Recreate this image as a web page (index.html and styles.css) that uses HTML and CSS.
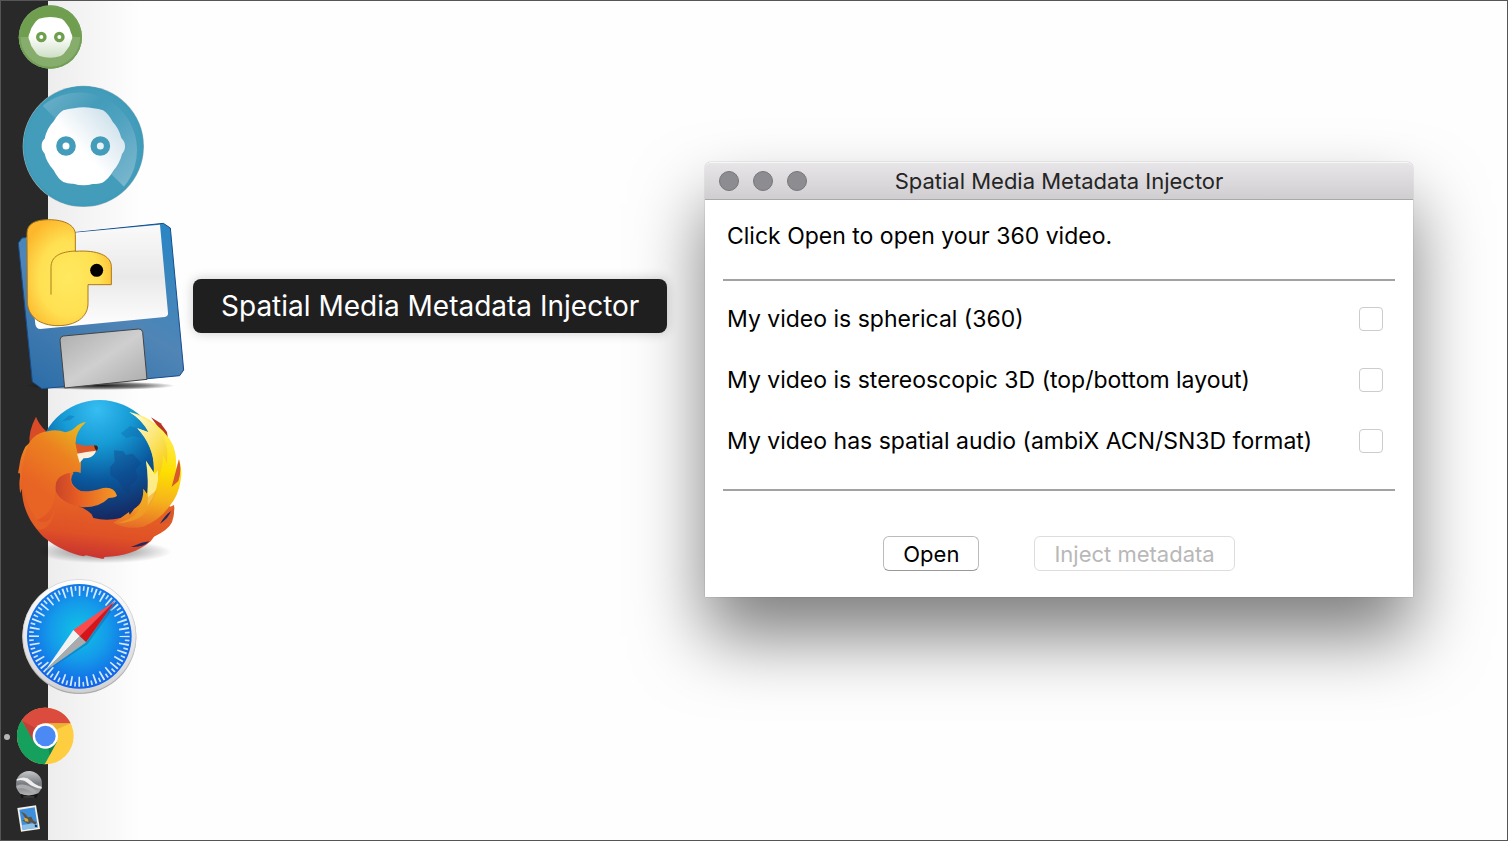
FILE: index.html
```
<!DOCTYPE html>
<html lang="en">
<head>
    <meta charset="UTF-8">
    <meta name="viewport" content="width=device-width, initial-scale=1.0">
    <title>Spatial Media Metadata Injector</title>
    <link rel="stylesheet" href="styles.css">
</head>
<body>
    <nav class="dock" aria-label="Dock">
        <a class="app robot-small" href="#" aria-label="Green robot">
            <svg viewBox="48 3 210 228">
                <defs>
                    <linearGradient id="faceGreen" x1="0" y1="0" x2="0" y2="1">
                        <stop offset=".45" stop-color="#fff"/><stop offset="1" stop-color="#cfdfc5"/>
                    </linearGradient>
                </defs>
                <circle cx="151" cy="111" r="95" fill="#6f9f4e"/>
                <path d="M56 111H246A95 95 0 0 1 56 111Z" fill="#86ad6b"/>
                <circle cx="151" cy="111" r="92" fill="none" stroke="#719f55" stroke-width="5"/>
                <path d="M117 56Q151 46 185 56Q193 61 200 72Q211 84 213 99Q221 111 213 123Q211 138 200 150Q192 163 182 168Q151 178 119 168Q109 163 102 150Q92 138 89 123Q82 111 89 99Q92 84 102 72Q109 61 117 56Z" fill="url(#faceGreen)"/>
                <circle cx="124" cy="111" r="11" fill="#fff" stroke="#6f9f4e" stroke-width="10"/>
                <circle cx="178" cy="111" r="11" fill="#fff" stroke="#6f9f4e" stroke-width="10"/>
            </svg>
        </a>
        <a class="app robot" href="#" aria-label="Blue robot">
            <svg viewBox="48 231 408 408">
                <defs>
                    <linearGradient id="faceBlue" x1="1" y1=".1" x2=".3" y2=".7">
                        <stop offset="0" stop-color="#c5dbe7"/><stop offset=".75" stop-color="#fff"/>
                    </linearGradient>
                    <linearGradient id="shineBlue" x1="0" y1="0" x2="1" y2="1">
                        <stop offset="0" stop-color="#6fb1ca"/><stop offset=".35" stop-color="#439cba"/><stop offset=".55" stop-color="#4fa2c0"/><stop offset="1" stop-color="#80b9cf"/>
                    </linearGradient>
                </defs>
                <circle cx="250" cy="439" r="182" fill="#9fb3bb"/>
                <circle cx="250" cy="439" r="180" fill="#439cba"/>
                <path d="M128 317A173 173 0 0 1 372 560Z" fill="url(#shineBlue)"/>
                <circle cx="250" cy="439" r="176" fill="none" stroke="#3e9cbb" stroke-width="7"/>
                <path d="M190 331Q205 326 222 325Q250 318 280 325Q297 326 309 331Q324 340 338 365Q357 385 364 414Q376 426 375 439Q376 450 366 462Q359 490 341 511Q324 540 307 548Q292 553 278 552Q250 560 220 551Q205 552 190 546Q175 538 161 511Q139 485 134 461Q124 450 125 438Q124 425 134 416Q140 386 161 364Q175 340 190 331Z" fill="url(#faceBlue)"/>
                <circle cx="198" cy="438" r="20" fill="#fff" stroke="#439cba" stroke-width="19"/>
                <circle cx="301" cy="438" r="20" fill="#e9f2f6" stroke="#439cba" stroke-width="19"/>
            </svg>
        </a>
        <a class="app injector" href="#" aria-labelledby="injector-label">
            <svg viewBox="48 9 528 546">
                <defs>
                    <linearGradient id="disk" x1=".8" y1="0" x2=".2" y2="1">
                        <stop offset="0" stop-color="#2b86c3"/><stop offset=".5" stop-color="#5085b6"/><stop offset="1" stop-color="#2f6fa9"/>
                    </linearGradient>
                    <linearGradient id="paper" x1="0" y1="0" x2="0" y2="1">
                        <stop offset="0" stop-color="#fafafa"/><stop offset=".5" stop-color="#e9e9ea"/><stop offset="1" stop-color="#fff"/>
                    </linearGradient>
                    <linearGradient id="shutter" x1="0" y1="0" x2="1" y2="1">
                        <stop offset="0" stop-color="#acacac"/><stop offset=".5" stop-color="#cfcfcf"/><stop offset="1" stop-color="#aaa"/>
                    </linearGradient>
                    <radialGradient id="snake" cx=".5" cy=".55" r=".6">
                        <stop offset="0" stop-color="#ffe95f"/><stop offset=".6" stop-color="#ffe052"/><stop offset="1" stop-color="#fdb72c"/>
                    </radialGradient>
                    <radialGradient id="diskShadow">
                        <stop offset="0" stop-color="#000" stop-opacity=".9"/><stop offset=".6" stop-color="#000" stop-opacity=".5"/><stop offset="1" stop-color="#000" stop-opacity="0"/>
                    </radialGradient>
                </defs>
                <ellipse cx="300" cy="527" rx="225" ry="13" fill="url(#diskShadow)"/>
                <path d="M66 84L490 40L511 54L551 480L539 497L126 536L97 515L55 99Z" fill="url(#disk)" stroke="#174d8d" stroke-width="3"/>
                <path d="M80 81L480 44L504 309Q505 319 494 321L121 357Q108 357 106 343Z" fill="url(#paper)"/>
                <path d="M194 534L180 390Q180 380 190 378L416 357Q426 356 428 367L441 508Z" fill="url(#shutter)" stroke="#444" stroke-width="3"/>
                <path d="M81 70C81 40 108 29 146 29C194 29 226 46 226 73V124C292 119 334 137 334 170V224H264V280C264 323 225 347 174 347C123 347 82 322 82 273Z" fill="url(#snake)" stroke="#a9781b" stroke-width="3"/>
                <path d="M153 254V172C153 139 181 125 227 123" fill="none" stroke="#ad7e18" stroke-width="3"/>
                <circle cx="290" cy="181" r="19.500"/>
            </svg>
            <span class="tooltip" id="injector-label">Spatial Media Metadata Injector</span>
        </a>
        <a class="app firefox" href="#" aria-label="Firefox">
            <svg viewBox="48 15 528 525">
                <defs>
                    <radialGradient id="globe" cx=".48" cy=".08" r=".95">
                        <stop offset="0" stop-color="#36bdf1"/><stop offset=".3" stop-color="#169bd5"/><stop offset=".6" stop-color="#0a599e"/><stop offset="1" stop-color="#172056"/>
                    </radialGradient>
                    <linearGradient id="fox" x1=".55" y1="0" x2=".4" y2="1">
                        <stop offset="0" stop-color="#f3a51e"/><stop offset=".3" stop-color="#ed7224"/><stop offset=".8" stop-color="#df5126"/><stop offset="1" stop-color="#c63032"/>
                    </linearGradient>
                    <linearGradient id="head" gradientUnits="userSpaceOnUse" x1="110" y1="290" x2="245" y2="110">
                        <stop offset="0" stop-color="#e86424"/><stop offset=".55" stop-color="#ec8220"/><stop offset="1" stop-color="#e7b820"/>
                    </linearGradient>
                    <linearGradient id="arm" x1="0" y1="0" x2="1" y2="0">
                        <stop offset="0" stop-color="#c8452a"/><stop offset=".35" stop-color="#e65b22"/><stop offset="1" stop-color="#f49a27"/>
                    </linearGradient>
                    <linearGradient id="tail" gradientUnits="userSpaceOnUse" x1="470" y1="80" x2="420" y2="430">
                        <stop offset="0" stop-color="#fff176"/><stop offset=".45" stop-color="#fddf00"/><stop offset=".7" stop-color="#f6b41c"/><stop offset="1" stop-color="#e4602a"/>
                    </linearGradient>
                    <linearGradient id="flame" x1="0" y1="0" x2=".7" y2="1">
                        <stop offset="0" stop-color="#fffef0"/><stop offset=".6" stop-color="#fbe469"/><stop offset="1" stop-color="#f8cc13"/>
                    </linearGradient>
                    <radialGradient id="ground">
                        <stop offset="0" stop-color="#000" stop-opacity=".5"/><stop offset="1" stop-color="#000" stop-opacity="0"/>
                    </radialGradient>
                </defs>
                <ellipse cx="310" cy="485" rx="205" ry="35" fill="url(#ground)"/>
                <circle cx="299" cy="214" r="184" fill="url(#globe)"/>
                <path d="M342 181L370 184L378 195L398 191L424 219L407 240L414 264L391 288L389 309L370 300L357 274L331 255L330 232L344 216Z" fill="#123b7e" opacity=".35"/>
                <path d="M362 130L391 108L414 116L425 143L400 138L379 144ZM186 94L207 76L225 79L210 90Z" fill="#0c6caf" opacity=".4"/>
                <path d="M453 82L482 100L501 126L505 153Z" fill="#b93427"/>
                <path d="M76 170C58 205 60 225 54 250Q62 245 60 262Q56 285 61 310L66 296C66 360 96 405 130 440C170 475 215 490 250 499L258 496Q285 503 310 507L314 501C370 500 415 485 452 454L462 440Q505 420 516 397Q525 370 522 345L510 350L470 300L430 330L390 372L362 384Q320 395 280 384L275 373Q252 352 237 350L243 304Q200 280 220 250L200 160L120 130Z" fill="url(#fox)"/>
                <path d="M89 162Q84 125 108 80Q117 104 138 123L120 150Z" fill="#d94b26"/>
                <path d="M388 66Q438 77 467 103Q519 145 526 190Q530 211 527 240L537 208Q548 240 542 270Q535 320 507 350Q480 390 430 410Q380 420 340 398L362 384L387 366L389 378L402 357L418 346Q432 320 430 296L441 311Q448 260 438 212L461 247Q466 170 412 115L446 127Q423 86 388 66Z" fill="url(#tail)"/>
                <path d="M388 66Q464 93 492 143Q507 175 500 221L489 194Q489 232 475 263L462 234Q461 170 412 115L446 127Q430 91 388 66Z" fill="url(#flame)"/>
                <path d="M438 212L464 253L474 241Q479 299 443 347Q446 270 438 212Z" fill="#fff7b0" opacity=".75"/>
                <path d="M430 296L444 322L470 300Q455 350 425 378Q395 400 350 400Q410 385 420 350Q432 320 430 296Z" fill="#f0a428" opacity=".6"/>
                <path d="M525 253L537 208Q546 242 535 273L515 291ZM522 347Q525 376 507 399L479 402Q505 379 522 347Z" fill="#d65a2b"/>
                <path d="M480 401Q494 377 513 363Q506 384 480 401ZM393 471L425 458L448 454Q430 473 393 471Z" fill="#25275d"/>
                <path d="M76 190Q90 130 143 124Q168 117 197 127Q217 122 226 112Q240 98 258 96Q226 125 227 159L236 191L243 216L242 249Q224 241 208 250Q166 258 165 313Q160 370 110 390Q66 330 66 260Q66 220 76 190Z" fill="url(#head)"/>
                <path d="M66 260Q66 330 110 390Q165 420 168 300C176 400 130 430 110 415Q60 350 66 260Z" fill="#e45f25"/>
                <path d="M226 159Q250 170 272 166L290 167Q297 180 285 187Q260 188 236 205Z" fill="#d9582a"/>
                <path d="M282 166L291 167Q297 175 290 182L285 177Z" fill="#382323"/>
                <path d="M231 191Q260 185 288 182Q284 199 264 204L251 205L239 218Z" fill="#fff0dc"/>
                <path d="M210 249Q206 284 231 300Q249 306 276 302Q290 300 309 294Q343 289 351 317Q348 322 326 324Q299 353 247 352Q183 339 168 305Q159 257 210 249Z" fill="url(#arm)"/>
            </svg>
        </a>
        <a class="app safari" href="#" aria-label="Safari">
            <svg viewBox="48 0 378 399">
                <defs>
                    <radialGradient id="compass" cx=".5" cy=".45" r=".55">
                        <stop offset="0" stop-color="#10c4e4"/><stop offset=".5" stop-color="#149bea"/><stop offset="1" stop-color="#1261e5"/>
                    </radialGradient>
                    <linearGradient id="rim" x1="0" y1="0" x2="0" y2="1">
                        <stop offset="0" stop-color="#fff"/><stop offset="1" stop-color="#d2d2d4"/>
                    </linearGradient>
                </defs>
                <circle cx="238" cy="201" r="171" fill="#aaa"/>
                <circle cx="238" cy="198" r="170" fill="url(#rim)" stroke="#ccc" stroke-width="2"/>
                <circle cx="238" cy="199" r="157" fill="url(#compass)"/>
                <!-- long and short ticks, one of each every ten degrees -->
                <circle cx="238" cy="199" r="136" fill="none" stroke="#d5eaff" stroke-width="30" pathLength="360" stroke-dasharray="2.2 7.800" stroke-dashoffset="1.1"/>
                <circle cx="238" cy="199" r="144" fill="none" stroke="#c8e3fc" stroke-width="14" pathLength="360" stroke-dasharray="2 8" stroke-dashoffset="-4"/>
                <path d="M135 307L258 218L347 93L349 102L263 222Z" fill="#06508a" opacity=".35"/>
                <path d="M346 92L220 180L239 199Z" fill="#ff4a4b"/>
                <path d="M346 92L239 199L258 217Z" fill="#d91419"/>
                <path d="M220 180L239 199L133 305Z" fill="#f2f2f2"/>
                <path d="M239 199L258 217L133 305Z" fill="#aaa"/>
            </svg>
        </a>
        <a class="app chrome running" href="#" aria-label="Chrome">
            <svg viewBox="48 399 192 192">
                <circle cx="136" cy="498" r="85" fill="#ffcd40"/>
                <path d="M65 451A85 85 0 0 1 212 460H136L102 519Z" fill="#db4c3f"/>
                <path d="M65 451A85 85 0 0 0 134 583L171 516L103 517Z" fill="#15a05d"/>
                <path d="M136 460H212L171 478Z" fill="#d9972b" opacity=".5"/>
                <path d="M65 451L98 510L107 475Z" fill="#922f2a" opacity=".35"/>
                <path d="M149 556L168 518L145 533Z" fill="#0b6740" opacity=".5"/>
                <circle cx="136" cy="498" r="38" fill="#fff"/>
                <circle cx="136" cy="498" r="31" fill="#4b8af4"/>
            </svg>
        </a>
        <a class="app small" href="#" aria-label="Google Earth Pro">
            <svg viewBox="48 591 102 102">
                <defs>
                    <linearGradient id="earth" x1="0" y1="0" x2="0" y2="1">
                        <stop offset="0" stop-color="#c6c8ca"/><stop offset=".5" stop-color="#777b80"/><stop offset="1" stop-color="#bbb"/>
                    </linearGradient>
                </defs>
                <circle cx="87" cy="642" r="39" fill="url(#earth)"/>
                <path d="M50 628Q76 615 93 632Q107 646 125 650V656Q97 652 82 638Q70 626 50 632Z" fill="#eee"/>
                <path d="M49 648Q76 634 111 665L102 672Q76 650 51 656Z" fill="#a9abad"/>
                <path d="M61 671Q87 682 115 670L109 684H64Z" fill="#161616"/>
                <path d="M70 681H103" stroke="#555" stroke-width="3"/>
            </svg>
        </a>
        <a class="app small" href="#" aria-label="Preview">
            <svg viewBox="48 693 102 102">
                <path d="M52 714L108 706L120 777L63 785Z" fill="#f4f1e7"/>
                <path d="M58 719L104 712L114 773L68 779Z" fill="#3d8fdb"/>
                <path d="M66 765L112 758L114 773L68 779Z" fill="#8cc0ea"/>
                <path d="M62 724L76 732L84 742L94 740L99 751L111 758L106 764L94 757L85 762L76 757L67 751L78 747Z" fill="#5d5443"/>
                <path d="M72 743L83 746L86 755L75 754Z" fill="#dca942"/>
                <circle cx="108" cy="768" r="4" fill="#123a60"/>
            </svg>
        </a>
    </nav>

    <main class="desktop">
        <form class="window">
            <header class="titlebar">
                <div class="controls">
                    <button type="button" aria-label="Close"></button>
                    <button type="button" aria-label="Minimize"></button>
                    <button type="button" aria-label="Zoom"></button>
                </div>
                <h1>Spatial Media Metadata Injector</h1>
            </header>
            <p class="message">Click Open to open your 360 video.</p>
            <div class="options">
                <div class="option">
                    <label for="spherical">My video is spherical (360)</label>
                    <input type="checkbox" id="spherical" disabled>
                </div>
                <div class="option">
                    <label for="stereo">My video is stereoscopic 3D (top/bottom layout)</label>
                    <input type="checkbox" id="stereo" disabled>
                </div>
                <div class="option">
                    <label for="audio">My video has spatial audio (ambiX ACN/SN3D format)</label>
                    <input type="checkbox" id="audio" disabled>
                </div>
            </div>
            <div class="actions">
                <button type="button">Open</button>
                <button type="submit" disabled>Inject metadata</button>
            </div>
        </form>
    </main>
</body>
</html>
```
FILE: styles.css
```
* {
    box-sizing: border-box;
}
body {
    margin: 0;
    min-height: 100vh;
    display: flex;
    border: 1px solid #555;
    background-color: #fefefe;
    font-family: Inter, Roboto, sans-serif;
    font-size: 22px;
    color: #000;
}
.dock {
    position: relative;
    z-index: 1;
    width: 47px;
    display: flex;
    flex-direction: column;
    align-items: flex-start;
    padding-left: 15px;
    background-color: #292929;
}
.app {
    position: relative;
    flex: none;
}
.app svg {
    display: block;
    width: 100%;
    height: 100%;
}
.robot-small {
    width: 70px;
    height: 76px;
}
.robot {
    width: 136px;
    height: 136px;
}
.injector {
    width: 176px;
    height: 182px;
}
.firefox {
    width: 176px;
    height: 175px;
}
.safari {
    width: 126px;
    height: 133px;
}
.chrome {
    width: 64px;
    height: 64px;
}
.small {
    width: 34px;
    height: 34px;
}
.running::before {
    content: "";
    position: absolute;
    left: -12px;
    top: 31px;
    width: 6px;
    height: 6px;
    border-radius: 50%;
    background-color: #b5b5b5;
}
.tooltip {
    position: absolute;
    left: 177px;
    top: 66px;
    padding: 0 28px;
    border-radius: 8px;
    background-color: #1f1f1f;
    box-shadow: 0 0 12px rgba(0, 0, 0, 0.2);
    color: #fff;
    font-size: 28px;
    line-height: 54px;
    white-space: nowrap;
}
.desktop {
    position: relative;
    flex: 1;
    background: linear-gradient(to right, #ededed, #fefefe 92px);
}
.window {
    position: absolute;
    top: 161px;
    right: 94px;
    width: 708px;
    border-radius: 6px 6px 0 0;
    background-color: #fff;
    box-shadow: 0 0 1px rgba(0, 0, 0, 0.6), 0 40px 70px rgba(0, 0, 0, 0.5);
}
.titlebar {
    display: grid;
    grid-template-columns: 1fr auto 1fr;
    align-items: center;
    height: 38px;
    padding: 0 14px;
    border-top: 1px solid #f7f7f7;
    border-bottom: 1px solid #aaa8aa;
    border-radius: 6px 6px 0 0;
    background: linear-gradient(#e7e5e7, #d0ced0);
}
.titlebar h1 {
    margin: 0;
    color: #252525;
    font-size: 22px;
    font-weight: 400;
}
.controls {
    display: flex;
    gap: 14px;
}
.controls button {
    width: 20px;
    height: 20px;
    padding: 0;
    border: 1px solid #77777a;
    border-radius: 50%;
    background-color: #8d8c91;
}
.message {
    margin: 0;
    padding: 21px 22px 28px;
    font-size: 23px;
    line-height: 30px;
}
.options {
    margin: 0 18px;
    padding: 7px 12px 18px 4px;
    border-top: 2px solid #a2a2a2;
    border-bottom: 2px solid #a2a2a2;
}
.option {
    display: flex;
    align-items: center;
    justify-content: space-between;
    height: 61px;
    font-size: 23px;
}
.option input {
    appearance: none;
    width: 24px;
    height: 24px;
    margin: 0;
    border: 1px solid #ccc;
    border-radius: 4px;
    background-color: #fff;
}
.actions {
    display: flex;
    justify-content: center;
    gap: 55px;
    padding: 45px 0 26px;
}
.actions button {
    height: 35px;
    padding: 0 19px;
    border: 1px solid #bbb;
    border-bottom-color: #999;
    border-radius: 6px;
    background-color: #fff;
    color: #000;
    font: inherit;
    line-height: 30px;
}
.actions button:disabled {
    border-color: #ddd;
    color: #b8b8b8;
}
```
